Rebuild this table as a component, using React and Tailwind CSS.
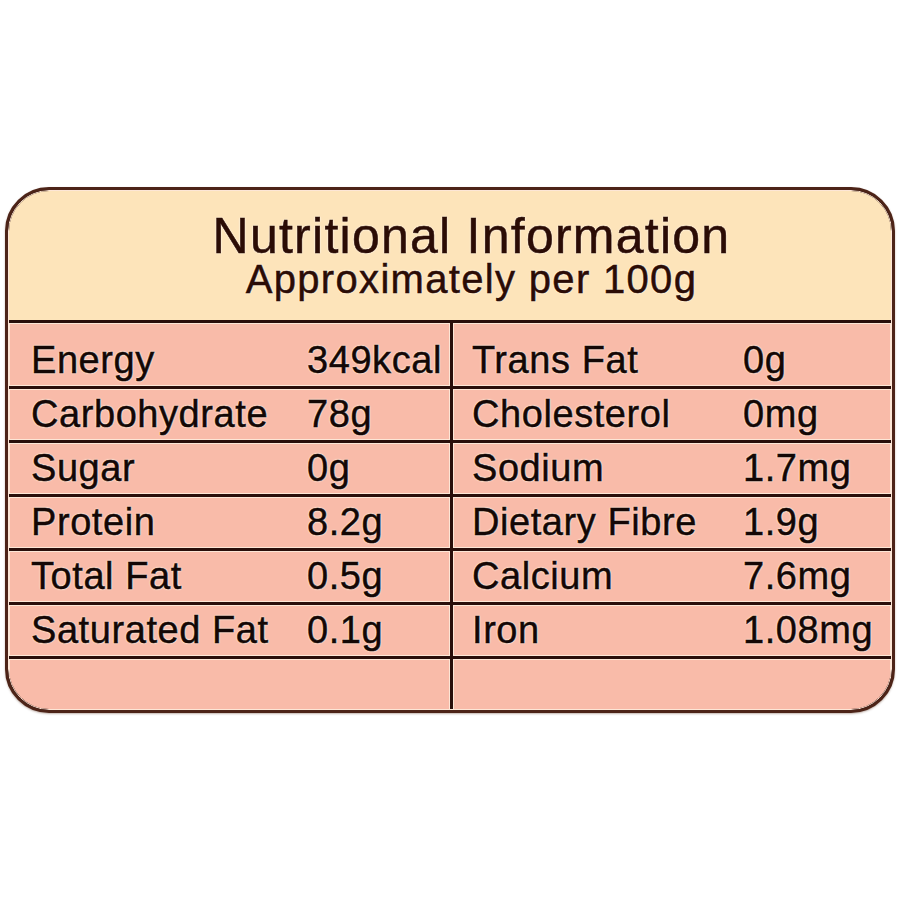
import React from "react";

// left and right halves of each row
const rows = [
  ["Energy", "349kcal", "Trans Fat", "0g"],
  ["Carbohydrate", "78g", "Cholesterol", "0mg"],
  ["Sugar", "0g", "Sodium", "1.7mg"],
  ["Protein", "8.2g", "Dietary Fibre", "1.9g"],
  ["Total Fat", "0.5g", "Calcium", "7.6mg"],
  ["Saturated Fat", "0.1g", "Iron", "1.08mg"],
];

const glow =
  "[text-shadow:0_0_2px_#fff6e8,0_0_2px_#fff6e8,0_0_1px_#fff6e8] [-webkit-text-stroke:0.5px_currentColor]";

function Cell({ label, value, valueLeft, first, corner }) {
  return (
    <div
      className={`flex items-center border border-[#fde6d6] bg-[#f9bba9] ${
        first ? "h-[63px] pt-[11px]" : "h-[51px]"
      } ${corner || ""}`}
    >
      {label && (
        <>
          <span className={`shrink-0 ${valueLeft}`}>{label}</span>
          <span>{value}</span>
        </>
      )}
    </div>
  );
}

export default function App() {
  return (
    <div className="w-[900px] h-[900px] bg-white pt-[187px] pl-[5px] font-['Liberation_Sans',Arial,sans-serif]">
      <div className="w-[890px] h-[526px] rounded-[44px] border-[3px] border-[#4d2418] bg-[#2a0e0a] overflow-hidden shadow-[0_1px_2px_rgba(80,40,20,0.35)]">
        <div className="h-full rounded-[41px] border border-[#fde6d6] overflow-hidden flex flex-col gap-[3px] bg-[#2a0e0a]">
          {/* header */}
          <div className={`h-[129px] shrink-0 bg-[#fde4ba] pt-[20px] pl-[43px] flex flex-col items-center text-[#2b0c05] ${glow}`}>
            <div className="text-[50px] leading-[50px] tracking-[0.025em]">Nutritional Information</div>
            <div className="text-[40px] leading-[36px] tracking-[0.033em]">Approximately per 100g</div>
          </div>

          {/* table */}
          <div className={`grid grid-cols-[441px_1fr] gap-x-[3px] gap-y-[3px] text-[38px] tracking-[0.015em] text-[#140705] ${glow}`}>
            {rows.map((r, i) => (
              <React.Fragment key={i}>
                <Cell label={r[0]} value={r[1]} valueLeft="w-[297px] pl-[21px]" first={i === 0} />
                <Cell label={r[2]} value={r[3]} valueLeft="w-[289px] pl-[18px]" first={i === 0} />
              </React.Fragment>
            ))}
            <Cell corner="h-[60px]" />
            <Cell corner="h-[60px]" />
          </div>
        </div>
      </div>
    </div>
  );
}
